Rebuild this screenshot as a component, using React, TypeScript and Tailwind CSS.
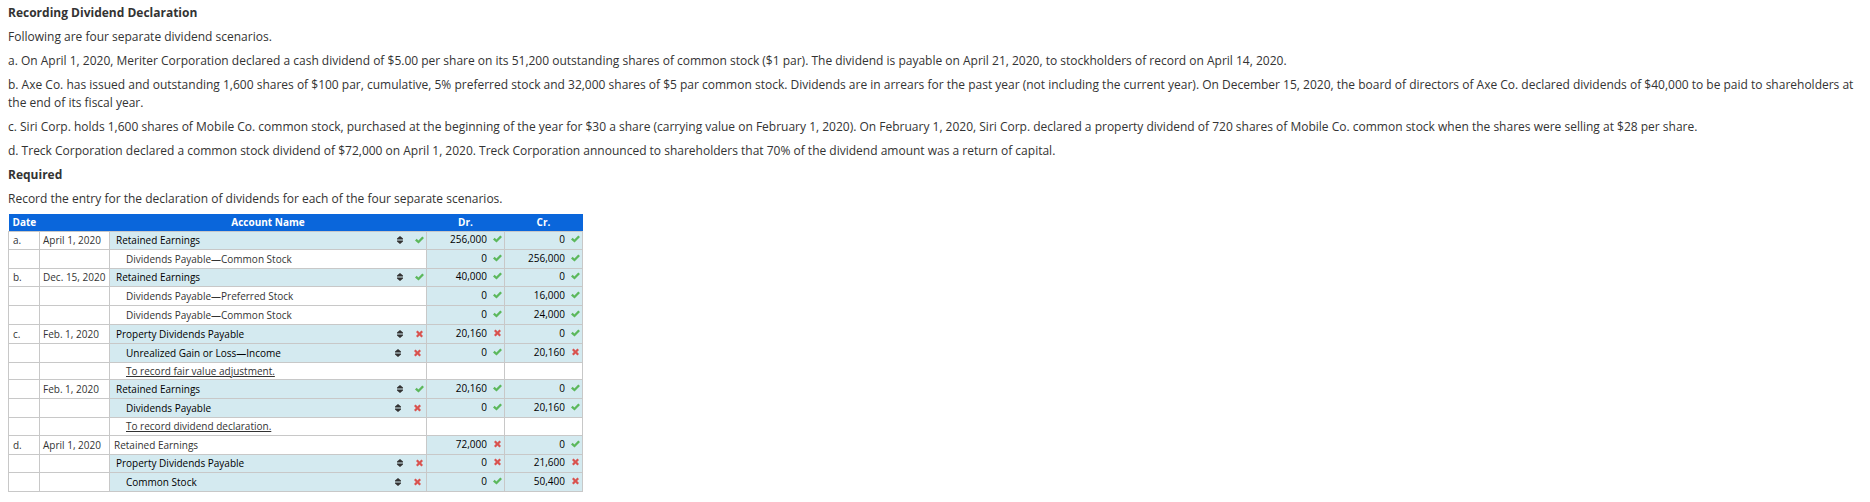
import React from "react";

type Mark = "ok" | "bad";
type Amount = { value: string; mark: Mark };
type Account = {
  text: string;
  kind: "select" | "text" | "note";
  indent?: boolean;
  mark?: Mark;
};
type Row = {
  id: string;
  date: string;
  account: Account;
  dr?: Amount;
  cr?: Amount;
  height: string;
};

const NORMAL = "h-[19px]";
const TIGHT = "h-[18px]";
const NOTE = "h-[17px]";

const ok = (value: string): Amount => ({ value, mark: "ok" });
const bad = (value: string): Amount => ({ value, mark: "bad" });
const pick = (text: string, mark: Mark, indent = false): Account => ({ text, kind: "select", indent, mark });
const fixed = (text: string, indent = false): Account => ({ text, kind: "text", indent });
const note = (text: string): Account => ({ text, kind: "note", indent: true });

const rows: Row[] = [
  { id: "a.", date: "April 1, 2020", account: pick("Retained Earnings", "ok"), dr: ok("256,000"), cr: ok("0"), height: TIGHT },
  { id: "", date: "", account: fixed("Dividends Payable—Common Stock", true), dr: ok("0"), cr: ok("256,000"), height: NORMAL },
  { id: "b.", date: "Dec. 15, 2020", account: pick("Retained Earnings", "ok"), dr: ok("40,000"), cr: ok("0"), height: TIGHT },
  { id: "", date: "", account: fixed("Dividends Payable—Preferred Stock", true), dr: ok("0"), cr: ok("16,000"), height: NORMAL },
  { id: "", date: "", account: fixed("Dividends Payable—Common Stock", true), dr: ok("0"), cr: ok("24,000"), height: NORMAL },
  { id: "c.", date: "Feb. 1, 2020", account: pick("Property Dividends Payable", "bad"), dr: bad("20,160"), cr: ok("0"), height: NORMAL },
  { id: "", date: "", account: pick("Unrealized Gain or Loss—Income", "bad", true), dr: ok("0"), cr: bad("20,160"), height: NORMAL },
  { id: "", date: "", account: note("To record fair value adjustment."), height: NOTE },
  { id: "", date: "Feb. 1, 2020", account: pick("Retained Earnings", "ok"), dr: ok("20,160"), cr: ok("0"), height: NORMAL },
  { id: "", date: "", account: pick("Dividends Payable", "bad", true), dr: ok("0"), cr: ok("20,160"), height: NORMAL },
  { id: "", date: "", account: note("To record dividend declaration."), height: TIGHT },
  { id: "d.", date: "April 1, 2020", account: fixed("Retained Earnings"), dr: bad("72,000"), cr: ok("0"), height: NORMAL },
  { id: "", date: "", account: pick("Property Dividends Payable", "bad"), dr: bad("0"), cr: bad("21,600"), height: TIGHT },
  { id: "", date: "", account: pick("Common Stock", "bad", true), dr: ok("0"), cr: bad("50,400"), height: NORMAL },
];

function MarkIcon({ mark }: { mark: Mark }) {
  return mark === "ok" ? (
    <svg viewBox="0 0 9 8" className="h-2 w-[9px] shrink-0" role="img" aria-label="Correct">
      <path d="M0 4.4 1.7 2.7 3.4 4.4 7.3 0.5 9 2.1 3.5 7.6Z" fill="#5cb85c" />
    </svg>
  ) : (
    <svg viewBox="0 0 9 8" className="h-2 w-[9px] shrink-0" role="img" aria-label="Incorrect">
      <path d="M1 2.1 2.6 .5 4.5 2.4 6.4 .5 8 2.1 6.1 4 8 5.9 6.4 7.5 4.5 5.6 2.6 7.5 1 5.9 2.9 4Z" fill="#d9534f" />
    </svg>
  );
}

function SortIcon() {
  return (
    <svg viewBox="0 0 6 8" className="h-2 w-[6px] shrink-0" aria-hidden="true">
      <path d="M3 0 6 2.5V3.4H0V2.5ZM0 4.6H6V5.5L3 8 0 5.5Z" fill="#333" />
    </svg>
  );
}

function AccountCell({ account, label }: { account: Account; label: string }) {
  if (account.kind !== "select") {
    return (
      <td className={`border border-[#c8c8c8] p-0 ${account.indent ? "pl-4" : "pl-1"}`}>
        <span className={`block leading-4 ${account.kind === "note" ? "underline" : ""}`}>{account.text}</span>
      </td>
    );
  }
  return (
    <td className="border border-[#c8c8c8] bg-[#d4eaf0] p-0">
      <div className={`flex items-center ${account.indent ? "pr-1 pl-4" : "pr-[2px] pl-[6px]"}`}>
        <select aria-label={label} defaultValue={account.text} className="h-4 min-w-0 grow appearance-none bg-transparent p-0 leading-4 text-black">
          <option>{account.text}</option>
        </select>
        <SortIcon />
        <span className="ml-3 flex">
          <MarkIcon mark={account.mark ?? "ok"} />
        </span>
      </div>
    </td>
  );
}

function AmountCell({ amount, label }: { amount?: Amount; label: string }) {
  if (!amount) return <td className="border border-[#c8c8c8] p-0" />;
  return (
    <td className="border border-[#c8c8c8] bg-[#d4eaf0] p-0">
      <div className="flex items-center gap-[6px] pr-[2px] pb-[2px]">
        <input aria-label={label} defaultValue={amount.value} className="h-[14px] w-0 min-w-0 grow bg-transparent p-0 text-right text-black" />
        <MarkIcon mark={amount.mark} />
      </div>
    </td>
  );
}

export default function App() {
  return (
    <main className="flex flex-col gap-[6px] bg-white px-2 pt-1 font-['Open_Sans',sans-serif] text-[12px] leading-[18px] text-[#333]">
      <h1 className="font-bold">Recording Dividend Declaration</h1>
      <p>Following are four separate dividend scenarios.</p>
      <p>a. On April 1, 2020, Meriter Corporation declared a cash dividend of $5.00 per share on its 51,200 outstanding shares of common stock ($1 par). The dividend is payable on April 21, 2020, to stockholders of record on April 14, 2020.</p>
      <p>b. Axe Co. has issued and outstanding 1,600 shares of $100 par, cumulative, 5% preferred stock and 32,000 shares of $5 par common stock. Dividends are in arrears for the past year (not including the current year). On December 15, 2020, the board of directors of Axe Co. declared dividends of $40,000 to be paid to shareholders at the end of its fiscal year.</p>
      <p>c. Siri Corp. holds 1,600 shares of Mobile Co. common stock, purchased at the beginning of the year for $30 a share (carrying value on February 1, 2020). On February 1, 2020, Siri Corp. declared a property dividend of 720 shares of Mobile Co. common stock when the shares were selling at $28 per share.</p>
      <p>d. Treck Corporation declared a common stock dividend of $72,000 on April 1, 2020. Treck Corporation announced to shareholders that 70% of the dividend amount was a return of capital.</p>
      <h2 className="font-bold">Required</h2>
      <p>Record the entry for the declaration of dividends for each of the four separate scenarios.</p>
      <table className="w-[575px] table-fixed border-collapse text-[10px] leading-4">
        <colgroup>
          <col className="w-[31px]" />
          <col className="w-[70px]" />
          <col />
          <col className="w-[78px]" />
          <col className="w-[78px]" />
        </colgroup>
        <thead>
          <tr className="h-[17px] bg-[#0a66db] font-bold text-white">
            <th className="p-0 pl-1 text-left">Date</th>
            <th className="p-0" />
            <th className="p-0">Account Name</th>
            <th className="p-0">Dr.</th>
            <th className="p-0">Cr.</th>
          </tr>
        </thead>
        <tbody>
          {rows.map((row, i) => (
            <tr key={i} className={row.height}>
              <td className="border border-[#c8c8c8] p-0 pl-1">{row.id}</td>
              <td className="border border-[#c8c8c8] p-0 pl-[3px] whitespace-nowrap">{row.date}</td>
              <AccountCell account={row.account} label={`Account name, line ${i + 1}`} />
              <AmountCell amount={row.dr} label={`Debit, line ${i + 1}`} />
              <AmountCell amount={row.cr} label={`Credit, line ${i + 1}`} />
            </tr>
          ))}
        </tbody>
      </table>
    </main>
  );
}
